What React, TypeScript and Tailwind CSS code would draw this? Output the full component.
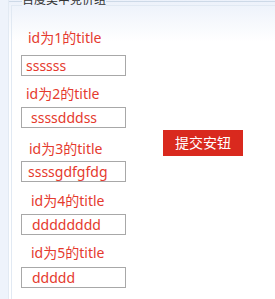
import React from "react";

const rows = [
  { label: "id为1的title", value: "ssssss", lm: "mt-[22px]", im: "mt-[7px]", lp: "pl-[7px]", vp: "pl-[4px]" },
  { label: "id为2的title", value: "ssssdddss", lm: "mt-[8px]", im: "mt-[3px]", lp: "pl-[5px]", vp: "pl-[9px]" },
  { label: "id为3的title", value: "ssssgdfgfdg", lm: "mt-[11px]", im: "mt-[2px]", lp: "pl-[8px]", vp: "pl-[6px]" },
  { label: "id为4的title", value: "dddddddd", lm: "mt-[9px]", im: "mt-[3px]", lp: "pl-[10px]", vp: "pl-[10px]" },
  { label: "id为5的title", value: "ddddd", lm: "mt-[8px]", im: "mt-[4px]", lp: "pl-[10px]", vp: "pl-[10px]" },
];

export default function App() {
  return (
    <div
      className="flex h-[299px] w-[275px] overflow-hidden bg-white"
      style={{ fontFamily: '"Noto Sans", "Noto Sans CJK SC", sans-serif' }}
    >
      <div className="w-[9px] shrink-0 border-r border-[#e2eaf3] bg-[#eef3fb]" />
      <div className="flex flex-1 flex-col bg-[linear-gradient(to_bottom,#ecf1fa,#ffffff_42px)] pt-px">
        <div className="flex flex-1 flex-col border-t border-[#cdd9e7] pt-[3px]">
          <div className="relative ml-[2px] flex flex-1 border-l border-t border-[#e1e9f3] pl-[9px]">
            <div className="absolute left-[10px] top-[-13px] bg-[#eef2fb] text-[12px] leading-[14px] text-[#333333]">
              百度美中竞价组
            </div>
            <div className="flex w-[105px] flex-col">
              {rows.map((r) => (
                <React.Fragment key={r.label}>
                  <div className={`${r.lm} ${r.lp} h-[20px] whitespace-nowrap text-[14px] leading-[20px] text-[#e53a2e]`}>
                    {r.label}
                  </div>
                  <div
                    className={`${r.im} ${r.vp} flex h-[21px] w-[105px] items-center border border-[#a8a8a8] bg-white text-[14px] leading-[18px] text-[#e53a2e]`}
                  >
                    {r.value}
                  </div>
                </React.Fragment>
              ))}
            </div>
            <div className="ml-[37px] mt-[124px] flex h-[26px] w-[80px] items-center justify-center self-start bg-[#d9291e] text-[14px] leading-[18px] text-white">
              提交安钮
            </div>
          </div>
        </div>
      </div>
    </div>
  );
}
